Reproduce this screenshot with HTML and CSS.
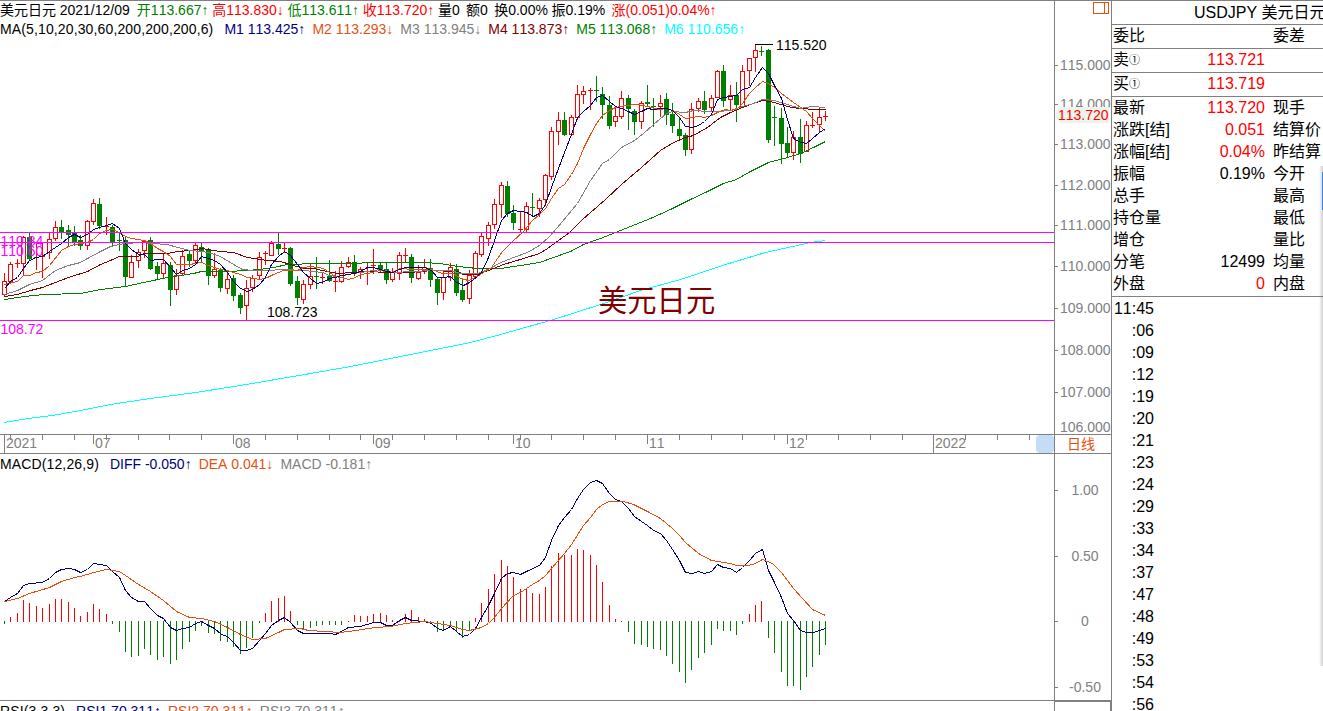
FILE: index.html
```html
<!doctype html>
<html lang="zh-CN">
<head>
    <meta charset="UTF-8">
    <meta name="viewport" content="width=device-width, initial-scale=1.0">
    <title>USDJPY 美元日元</title>
    <link rel="stylesheet" href="styles.css">
<script defer src="chart.js"></script></head>
<body>
    <div class="terminal">
        <div class="main">
            <div class="pane price">
                <div class="legend">
                    <div class="line day">
                        <span>美元日元</span>
                        <span>2021/12/09</span>
                        <span class="green open">开113.667↑</span>
                        <span class="red">高113.830↓</span>
                        <span class="green">低113.611↑</span>
                        <span class="red">收113.720↑</span>
                        <span>量0</span>
                        <span class="wide">额0</span>
                        <span class="wide">换0.00%</span>
                        <span>振0.19%</span>
                        <span class="red wide">涨(0.051)0.04%↑</span>
                    </div>
                    <div class="line items">
                        <span class="name">MA(5,10,20,30,60,200,200,200,6)</span>
                        <span class="navy">M1 113.425↑</span>
                        <span class="orange">M2 113.293↓</span>
                        <span class="gray">M3 113.945↓</span>
                        <span class="maroon">M4 113.873↑</span>
                        <span class="green">M5 113.068↑</span>
                        <span class="cyan">M6 110.656↑</span>
                    </div>
                </div>
                <svg id="price" viewBox="0 1 1054 433" width="1054" height="433"></svg>
            </div>
            <div class="pane dates">
                <svg id="dates" viewBox="0 435 1054 18" width="1054" height="18"></svg>
            </div>
            <div class="pane macd">
                <div class="legend">
                    <div class="line items">
                        <span class="name">MACD(12,26,9)</span>
                        <span class="navy">DIFF -0.050↑</span>
                        <span class="orange">DEA 0.041↓</span>
                        <span class="gray">MACD -0.181↑</span>
                    </div>
                </div>
                <svg id="macd" viewBox="0 454 1054 246" width="1054" height="246"></svg>
            </div>
            <div class="pane rsi">
                <div class="line items">
                    <span class="name">RSI(3,3,3)</span>
                    <span class="navy">RSI1 70.311↑</span>
                    <span class="orange">RSI2 70.311↑</span>
                    <span class="gray">RSI3 70.311↑</span>
                </div>
            </div>
        </div>

        <div class="axis">
            <svg id="priceAxis" viewBox="1055 1 56 433" width="56" height="433"></svg>
            <div class="period">日线</div>
            <svg id="macdAxis" viewBox="1055 454 56 246" width="56" height="246"></svg>
            <div class="axis-end"></div>
        </div>

        <div class="quote">
            <div class="title">USDJPY 美元日元</div>
            <div class="row head"><span>委比</span><b></b><span>委差</span></div>
            <div class="row head"><span>卖<i>①</i></span><b class="red">113.721</b></div>
            <div class="row head"><span>买<i>①</i></span><b class="red">113.719</b></div>
            <div class="rows">
                <div class="row"><span>最新</span><b class="red">113.720</b><span>现手</span></div>
                <div class="row"><span>涨跌[结]</span><b class="red">0.051</b><span>结算价</span></div>
                <div class="row"><span>涨幅[结]</span><b class="red">0.04%</b><span>昨结算</span></div>
                <div class="row"><span>振幅</span><b>0.19%</b><span>今开</span></div>
                <div class="row"><span>总手</span><b></b><span>最高</span></div>
                <div class="row"><span>持仓量</span><b></b><span>最低</span></div>
                <div class="row"><span>增仓</span><b></b><span>量比</span></div>
                <div class="row"><span>分笔</span><b>12499</b><span>均量</span></div>
                <div class="row"><span>外盘</span><b class="red">0</b><span>内盘</span></div>
            </div>
            <div class="ticks">
                <div>11:45</div>
                <div>:06</div>
                <div>:09</div>
                <div>:12</div>
                <div>:19</div>
                <div>:20</div>
                <div>:21</div>
                <div>:23</div>
                <div>:24</div>
                <div>:29</div>
                <div>:33</div>
                <div>:34</div>
                <div>:37</div>
                <div>:47</div>
                <div>:48</div>
                <div>:49</div>
                <div>:53</div>
                <div>:54</div>
                <div>:56</div>
            </div>
            <div class="edge"></div>
        </div>
    </div>
</body>
</html>
```
FILE: styles.css
```css
*{
    box-sizing: border-box;
}
body {
    margin: 0;
    background: #fff;
    color: #000;
    font-family: "Liberation Sans", "Noto Sans CJK SC", sans-serif;
    font-size: 14px;
    font-kerning: none;
    overflow: hidden;
}
svg {
    display: block;
}
.terminal {
    display: grid;
    grid-template-columns: 1054px 57px 212px;
    height: 711px;
    border-top: 1px solid #808080;
    overflow: hidden;
}
.red { color: #ff0000; }
.green { color: #008000; }
.navy { color: #000080; }
.orange { color: #e6500f; }
.gray { color: #808080; }
.maroon { color: #800000; }
.cyan { color: #00ffff; }

/* left side */
.main {
    display: grid;
    grid-template-rows: 433px 19px 247px 11px;
}
.pane {
    position: relative;
    overflow: hidden;
}
.dates, .macd, .rsi {
    border-top: 1px solid #808080;
}
.legend {
    position: absolute;
    left: 0;
    top: 0;
}
.macd .legend {
    top: 1px;
}
.line {
    height: 19px;
    line-height: 19px;
    white-space: nowrap;
}
.day {
    display: flex;
    gap: 3.7px;
}
.day .open {
    margin-left: 3.4px;
}
.day .wide {
    margin-left: 2.6px;
}
.items {
    display: flex;
    gap: 7px;
}
.items .name {
    margin-right: 4px;
    letter-spacing: .13px;
}
.rsi .line {
    margin-top: 1px;
}

/* scale */
.axis {
    border-left: 1px solid #808080;
    display: grid;
    grid-template-rows: 433px 19px 247px 11px;
}
.period {
    border-top: 1px solid #808080;
    color: #e6500f;
    text-align: center;
    line-height: 18px;
    padding-right: 4px;
}
#macdAxis {
    border-top: 1px solid #808080;
    height: 247px;
}
.axis-end {
    border-top: 2px solid #808080;
    border-right: 1px solid #808080;
}

/* quotes */
.quote {
    position: relative;
    border-left: 1px solid #808080;
    font-size: 16px;
    overflow: hidden;
}
.title {
    height: 23px;
    line-height: 23px;
    padding-left: 82px;
    white-space: nowrap;
}
.row {
    display: grid;
    grid-template-columns: 69px 83px 60px;
    height: 22px;
    line-height: 22px;
    padding-left: 1px;
    white-space: nowrap;
}
.row b {
    font-weight: normal;
    text-align: right;
}
.row span:last-child {
    padding-left: 8px;
}
.row i {
    font-style: normal;
    font-size: 11px;
    vertical-align: 1px;
}
.head {
    height: 24px;
    line-height: 21px;
    border-top: 1px solid #808080;
}
.rows {
    border-top: 1px solid #808080;
    border-bottom: 1px solid #808080;
    height: 201px;
}
.ticks {
    width: 42px;
    line-height: 22px;
    text-align: right;
    padding-top: 1px;
}
.edge {
    position: absolute;
    right: 0;
    top: 165px;
    width: 4px;
    height: 500px;
    background: linear-gradient(to right, rgba(120,120,120,0), rgba(120,120,120,.35));
}
.edge::after {
    content: "";
    position: absolute;
    right: 0;
    top: 6px;
    width: 1px;
    height: 38px;
    background: #3c82f0;
}

/* drawing */
.shape {
    shape-rendering: crispEdges;
}
svg text {
    font-family: "Liberation Sans", "Noto Sans CJK SC", sans-serif;
    font-size: 14px;
}
svg .watermark {
    font-size: 29.3px;
}
```
FILE: chart.js
```js
const RED = "#ff0000", GREEN = "#008000", GRAY = "#808080", MAGENTA = "#ff00ff";
const NS = "http://www.w3.org/2000/svg";

// up/down, high, body top, body bottom, low
const candles = `r 273 281 294 295|r 262 264 281 283|r 259 263 263 267|r 236 237 263 275|g 232 237 258 260|r 242 257 257 269|r 242 256 256 277
r 232 239 252 258|r 221 227 238 240|g 220 227 231 238|g 225 230 234 246|g 226 232 241 245|g 235 240 245 249|r 220 221 245 249|r 199 203 221 224
g 198 204 225 228|r 217 226 226 234|g 225 227 241 245|g 233 240 240 250|g 237 240 276 286|r 255 262 277 277|r 249 252 260 267|r 240 241 250 257
g 237 240 268 269|g 262 266 273 278|r 253 263 273 277|g 262 265 289 305|r 269 275 289 294|r 250 256 273 275|g 250 254 260 266|r 242 245 260 262
g 242 247 251 261|g 248 249 275 284|r 253 269 275 277|g 268 270 287 291|r 270 279 288 293|g 275 278 295 300|g 293 295 307 313|r 280 288 305 320
r 275 278 287 291|r 252 257 275 278|r 251 253 253 264|r 241 243 255 255|g 233 244 248 254|r 243 248 248 252|g 247 248 283 285|g 276 281 297 304
r 280 284 299 303|r 263 276 284 288|g 257 276 276 288|r 272 277 277 283|g 260 276 280 281|r 271 281 281 291|r 261 267 281 282|r 257 262 266 267
g 255 262 271 275|r 267 269 271 278|r 263 271 271 284|r 249 265 265 273|g 262 265 270 271|g 263 269 279 283|r 268 272 279 281|r 252 255 273 279
r 248 255 255 262|g 254 257 277 282|r 265 272 278 279|r 259 267 271 273|g 259 268 279 286|g 278 279 292 304|r 271 277 292 299|r 263 267 277 280
g 264 269 292 295|g 279 290 299 301|r 270 275 298 303|r 251 253 276 277|r 233 236 254 256|r 222 225 238 245|r 199 204 224 228|r 182 185 204 217
g 181 186 213 216|g 205 213 222 229|r 211 229 229 232|r 202 206 229 231|g 193 207 207 216|r 198 200 208 216|r 174 175 199 205|r 127 131 176 179
r 112 120 131 144|g 112 120 134 135|r 115 117 134 134|r 85 94 117 119|r 86 91 94 103|r 88 90 90 109|g 76 90 90 101|g 87 94 104 118|g 96 105 125 128
r 107 116 121 126|r 91 98 116 118|g 95 98 108 129|g 109 111 121 134|r 101 103 121 128|g 85 102 103 106|g 98 106 106 126|r 95 103 106 116
g 93 99 114 124|g 103 114 125 132|g 117 129 135 140|g 133 135 149 155|r 103 109 149 153|r 98 101 108 111|g 91 101 109 113|r 95 98 107 111
r 70 71 97 97|g 65 71 100 106|r 85 95 99 109|g 82 95 104 121|r 65 71 106 107|r 58 58 70 85|r 44 50 57 71|g 46 51 51 55|g 49 50 139 142
g 106 117 117 145|g 108 118 143 163|g 127 143 152 157|r 131 137 152 159|g 119 137 153 162|r 121 125 151 151|r 112 125 125 127|r 107 117 124 131
r 111 116 116 120`.split(/[|\n]/).map(c => c.split(" "));

const averages = [
    ["#00ffff", "4,422 28,418 52,415 80,410 110,404 150,398 195,392 240,385 275,379 310,373 350,366 380,360 425,351 470,342 500,334 553,319 575,312 600,304 640,290 680,279 725,264 765,252 810,242 825,240"],
    [GREEN, "4,299 17,297 24,296 43,294 80,293 100,289 125,286 143,282 167,277 193,273 201,271 227,271 247,270 259,269 273,267 287,264 317,263 350,263 373,262 423,262 440,263 457,266 477,268 500,268 520,265 539,262 553,257 570,251 583,244 600,238 625,228 650,218 670,209 690,199 707,191 723,183 736,179 750,171 768,162 787,157 800,153 813,147 825,141"],
    ["#800000", "4,296 17,294 30,290 42,287 55,282 68,277 87,271 100,264 110,260 119,256 137,256 144,253 167,253 177,251 190,250 201,248 220,251 233,252 247,257 267,260 280,261 290,264 303,268 313,268 322,270 337,273 367,271 387,272 410,272 430,270 457,271 463,274 477,274 488,270 503,264 523,258 539,253 547,248 558,240 569,232 582,219 605,199 621,184 641,167 660,150 673,142 685,137 693,135 707,127 720,117 730,112 742,107 753,103 762,100 774,102 787,106 798,108 817,109 825,109"],
    [GRAY, "4,294 17,290 23,287 29,284 42,280 55,270 68,265 80,262 87,258 100,251 110,246 119,244 125,243 140,242 152,243 167,244 177,247 190,250 201,251 208,252 220,256 233,264 242,269 253,270 267,270 283,269 303,270 313,271 322,272 329,275 337,276 348,274 360,272 380,269 393,272 433,270 450,270 460,273 477,273 490,268 498,263 513,257 527,252 539,245 548,237 557,227 567,215 577,203 590,180 602,163 609,159 615,153 621,147 634,140 643,133 653,124 666,113 672,111 685,112 693,110 707,111 717,111 730,110 742,106 753,103 762,99 774,100 787,104 800,108 811,106 825,107"],
    ["#e6500f", "4,284 17,281 23,275 29,275 36,272 42,271 49,265 61,250 68,246 74,244 87,242 93,239 99,233 106,230 112,229 119,232 125,236 131,238 144,240 150,243 157,248 163,251 170,256 176,264 182,264 189,264 201,262 208,265 220,269 227,270 233,272 240,274 247,277 260,279 267,277 273,274 283,270 297,270 303,267 310,266 317,267 323,268 329,272 335,276 341,277 348,279 355,277 360,274 367,273 380,270 392,272 400,268 413,269 431,269 442,273 453,273 460,278 468,280 475,277 483,272 491,267 497,258 502,251 512,241 523,231 532,220 539,214 545,208 551,198 558,188 564,184 571,174 577,163 583,148 590,134 596,123 602,115 609,110 615,107 625,105 637,104 647,106 659,109 666,108 672,110 679,114 685,118 692,117 698,116 704,117 711,115 717,112 725,109 730,110 736,109 742,103 749,93 755,87 762,81 768,83 774,87 781,93 793,102 806,111 812,118 819,125 825,131"],
    ["#000080", "4,288 10,281 17,277 23,268 29,260 36,257 42,256 49,251 55,247 61,243 68,237 74,234 80,237 87,234 93,229 99,227 106,225 112,223 119,228 125,243 131,249 138,254 144,254 150,260 157,259 163,259 170,267 176,274 182,270 189,268 195,264 201,256 208,258 214,260 220,264 227,272 233,281 240,288 247,291 252,289 259,284 265,277 271,264 278,256 284,251 290,255 297,264 303,272 310,278 316,283 322,282 329,278 335,277 341,275 348,274 354,273 360,271 367,267 373,267 380,269 386,271 392,272 399,269 405,267 418,267 424,267 431,270 437,277 443,277 450,276 456,282 463,285 469,282 477,276 481,272 488,257 494,240 501,220 507,213 513,210 520,211 526,212 533,216 539,213 545,204 551,187 558,168 564,152 571,134 577,117 583,111 590,105 596,97 602,95 609,101 615,106 621,108 628,111 634,114 641,111 647,108 653,109 660,108 666,108 672,110 679,117 685,126 692,127 698,125 704,121 711,114 717,99 723,97 730,96 736,95 742,89 749,87 755,77 762,67 768,73 774,85 781,98 787,119 793,138 800,142 806,143 812,138 819,132 825,128"]
];

// end of each histogram bar, the zero line is at 621
const bars = [624,617,613,600,603,606,608,604,599,599,602,608,616,612,604,609,614,624,632,652,657,656,649,655,660,657,664,660,649,642,631,626,633,634,641,642,647,654,648,638,623,613,601,598,596,611,625,629,628,626,625,625,625,625,621,615,616,616,614,613,615,620,621,614,610,617,619,624,632,631,625,632,638,631,618,603,589,574,560,566,577,589,589,593,594,587,566,553,555,555,549,550,555,565,582,605,619,622,632,644,645,647,649,650,656,664,672,683,670,658,653,645,629,631,631,635,624,614,605,601,638,653,672,686,686,690,677,667,655,645];
const diff = "4,601 10,597 17,593 23,585 29,583 42,582 49,578 55,572 61,569 68,568 74,569 80,572 87,569 93,563 106,565 112,571 119,577 125,590 131,597 138,601 144,601 150,608 157,615 163,618 170,627 176,630 182,628 189,627 195,623 201,621 208,625 214,628 221,634 227,636 233,642 240,650 246,650 252,648 259,640 265,633 271,625 278,620 284,617 290,622 297,630 303,633 330,633 335,634 341,631 348,627 360,626 373,622 380,622 386,625 392,625 399,620 405,617 411,620 424,621 431,623 437,628 443,630 450,626 456,631 462,636 469,634 475,628 481,617 488,605 494,593 501,578 507,573 513,572 520,574 526,571 539,565 545,557 551,540 558,525 564,517 571,509 577,498 583,489 590,482 596,480 602,483 609,493 615,499 621,501 628,508 634,516 641,521 647,525 653,530 660,533 666,540 672,549 679,560 685,572 692,573 698,571 704,573 711,571 717,564 723,567 730,568 736,572 742,567 749,560 755,553 762,549 768,570 774,582 781,597 787,613 793,620 800,630 806,632 813,632 825,628";
const dea = "4,601 17,598 29,593 49,587 61,581 74,577 80,576 93,572 106,569 119,571 125,575 138,584 150,591 163,600 176,611 189,617 201,618 214,621 227,627 240,634 252,639 265,638 278,632 284,629 300,628 308,630 340,632 355,630 375,627 390,626 405,623 424,621 437,623 450,625 462,629 469,630 481,627 488,623 494,617 501,608 513,595 520,592 532,584 539,580 545,575 551,568 564,553 571,544 583,525 590,517 596,509 602,504 609,501 623,501 633,504 647,511 660,518 672,528 679,535 685,542 698,553 711,560 730,563 736,565 748,565 755,563 762,559 772,563 781,572 793,588 812,609 825,615";

function add(svg, name, attrs, text){
    const el = document.createElementNS(NS, name);
    for(const key in attrs) el.setAttribute(key, attrs[key]);
    if(text) el.textContent = text;
    svg.appendChild(el);
}
function rect(svg, x, y, width, height, fill){
    add(svg, "rect", {x, y, width, height, fill, class: "shape"});
}
function label(svg, x, y, text, fill, anchor){
    add(svg, "text", {x, y, fill, "text-anchor": anchor || "start"}, text);
}
function curve(svg, points, stroke){
    add(svg, "polyline", {points, stroke, fill: "none", class: "shape", transform: "translate(.5 .5)"});
}
function xOf(i){
    return Math.floor(4.5 + i * 6.3655);
}

const price = document.getElementById("price");
candles.forEach(([kind, high, top, bottom, low], i) => {
    const x = xOf(i), color = kind == "r" ? RED : GREEN;
    const h = bottom - top + 1;
    rect(price, x, high, 1, low - high + 1, color);
    rect(price, x - 2, top, 5, h, color);
    if(kind == "r" && h > 2) rect(price, x - 1, +top + 1, 3, h - 2, "#fff");
});
averages.forEach(([color, points]) => curve(price, points, color));
[232, 242, 320].forEach(y => rect(price, 0, y, 1054, 1, MAGENTA));
label(price, 0.5, 246, "110.84", MAGENTA);
label(price, 0.5, 256, "110.60", MAGENTA);
label(price, 0.5, 334, "108.72", MAGENTA);
rect(price, 755, 44, 18, 1, "#000");
label(price, 776, 50, "115.520", "#000");
label(price, 267, 317, "108.723", "#000");
add(price, "text", {x: 598, y: 311, fill: "#800000", class: "watermark"}, "美元日元");

const dates = document.getElementById("dates");
for(let k = 0; k < 33; k++) rect(dates, Math.floor(10.8 + k * 31.83), 435, 1, 5, GRAY);
[["2021", 4, 18], ["07", 93, 9], ["08", 233, 9], ["09", 373, 9], ["10", 513, 9], ["11", 647, 9], ["12", 787, 9], ["2022", 933, 18]].forEach(([text, x, h]) => {
    rect(dates, x, 435, 1, h, GRAY);
    label(dates, x + 2, 448, text, GRAY);
});
add(dates, "rect", {x: 1036, y: 435, width: 18, height: 18, rx: 4, fill: "#c4dcf5"});

const macd = document.getElementById("macd");
bars.forEach((y, i) => {
    if(y <= 621) rect(macd, xOf(i), y, 1, 622 - y, RED);
    else rect(macd, xOf(i), 621, 1, y - 621, GREEN);
});
curve(macd, diff, "#000080");
curve(macd, dea, "#e6500f");

const priceAxis = document.getElementById("priceAxis");
[65, 104, 144, 185, 225, 266, 308, 350, 392, 427].forEach((y, i) => {
    if(y < 427) rect(priceAxis, 1055, y, 3, 1, GRAY);
    label(priceAxis, 1110.5, y + 5, (115 - i) + ".000", GRAY, "end");
});
add(priceAxis, "path", {d: "M1055 115L1060 107H1109V123H1060Z", fill: "#ecf4ec"});
label(priceAxis, 1058, 120, "113.720", RED);
add(priceAxis, "path", {d: "M1093.5 2.5H1108.5V13.5H1093.5ZM1104.5 2.5V13.5", fill: "none", stroke: "#e6500f", class: "shape"});

const macdAxis = document.getElementById("macdAxis");
[["1.00", 490], ["0.50", 556], ["0", 621], ["-0.50", 687]].forEach(([text, y]) => {
    rect(macdAxis, 1055, y, 3, 1, GRAY);
    label(macdAxis, 1085, y + 5, text, GRAY, "middle");
});
```
